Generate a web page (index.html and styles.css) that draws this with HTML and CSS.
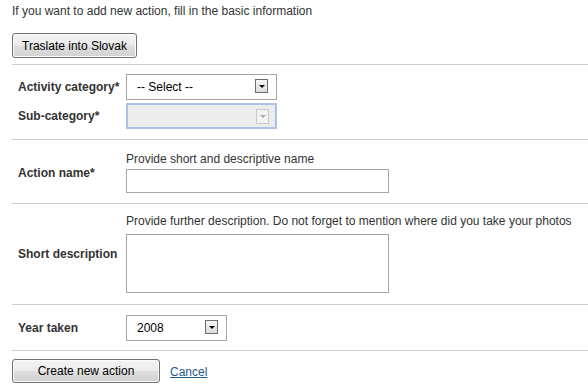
FILE: index.html
```html
<!DOCTYPE html>
<html lang="en">
<head>
    <meta charset="UTF-8">
    <meta name="viewport" content="width=device-width, initial-scale=1.0">
    <title>New action</title>
    <link rel="stylesheet" href="styles.css">
</head>
<body>
    <div id="new-action">
        <p class="intro">If you want to add new action, fill in the basic information</p>

        <div class="top-bar">
            <button class="btn btn-translate">Traslate into Slovak</button>
        </div>

        <div class="section section-category">
            <div class="row">
                <label class="label">Activity category*</label>
                <div class="select select-wide">
                    <select>
                        <option>-- Select --</option>
                    </select>
                    <span class="arrow"></span>
                </div>
            </div>
            <div class="row">
                <label class="label">Sub-category*</label>
                <div class="select select-wide disabled">
                    <select disabled>
                        <option></option>
                    </select>
                    <span class="arrow"></span>
                </div>
            </div>
        </div>

        <div class="section section-name">
            <div class="row">
                <label class="label">Action name*</label>
                <div class="field">
                    <div class="hint">Provide short and descriptive name</div>
                    <input type="text" class="text-input">
                </div>
            </div>
        </div>

        <div class="section section-desc">
            <div class="row">
                <label class="label">Short description</label>
                <div class="field">
                    <div class="hint hint-desc">Provide further description. Do not forget to mention where did you take your photos</div>
                    <textarea class="text-area"></textarea>
                </div>
            </div>
        </div>

        <div class="section section-year">
            <div class="row">
                <label class="label">Year taken</label>
                <div class="select select-year">
                    <select>
                        <option>2008</option>
                    </select>
                    <span class="arrow"></span>
                </div>
            </div>
        </div>

        <div class="section actions">
            <button class="btn btn-create">Create new action</button>
            <a href="#" class="cancel">Cancel</a>
        </div>
    </div>
</body>
</html>
```

FILE: styles.css
```css
body {
    margin: 0;
    padding: 0;
    background: #fff;
    color: #333;
    font-family: "Liberation Sans", Arial, sans-serif;
    font-size: 12px;
}

#new-action {
    padding-left: 12px;
}

.intro {
    margin: 0;
    padding-top: 4px;
    line-height: 14px;
}

.top-bar {
    padding: 15px 0 6px 0;
    height: 25px;
}

.btn {
    font-family: "Liberation Sans", Arial, sans-serif;
    font-size: 12px;
    color: #000;
    border: 1px solid #707070;
    border-radius: 3px;
    background: linear-gradient(to bottom, #f4f4f4 0%, #ececec 48%, #dedede 52%, #d2d2d2 100%);
    box-shadow: inset 0 0 0 1px #fcfcfc;
    padding: 0;
    margin: 0;
    cursor: pointer;
}

.btn-translate {
    width: 125px;
    height: 25px;
}

.btn-create {
    width: 148px;
    height: 24px;
}

.section {
    border-top: 1px solid #cdcdcd;
}

.row {
    display: flex;
    align-items: center;
}

.label {
    width: 108px;
    padding-left: 6px;
    font-weight: bold;
    color: #333;
    line-height: 14px;
}

.section-category {
    padding: 9px 0 10px 0;
}

.section-category .row + .row {
    margin-top: 3px;
}

.section-name {
    padding: 12px 0 10px 0;
}

.section-desc {
    padding: 10px 0 11px 0;
}

.section-year {
    padding: 10px 0 9px 0;
}

.actions {
    padding-top: 8px;
    display: flex;
    align-items: flex-start;
    gap: 10px;
    height: 33px;
}

.actions .cancel {
    margin-top: 6px;
}

.field {
    display: flex;
    flex-direction: column;
}

.hint {
    line-height: 14px;
    margin-bottom: 3px;
}

.hint-desc {
    margin-bottom: 6px;
}

.text-input {
    width: 263px;
    height: 24px;
    box-sizing: border-box;
    border: 1px solid #a5a5a5;
    margin: 0;
    padding: 2px 4px;
}

.text-area {
    width: 263px;
    height: 59px;
    box-sizing: border-box;
    border: 1px solid #a5a5a5;
    margin: 0;
    padding: 2px 4px;
    resize: none;
}

/* custom looking dropdowns */
.select {
    position: relative;
    height: 26px;
    box-sizing: border-box;
}

.select-wide {
    width: 151px;
}

.select-year {
    width: 101px;
}

.select select {
    appearance: none;
    -webkit-appearance: none;
    width: 100%;
    height: 100%;
    box-sizing: border-box;
    border: 1px solid #a5a5a5;
    background: #fff;
    padding: 0 0 0 10px;
    margin: 0;
    font-family: "Liberation Sans", Arial, sans-serif;
    font-size: 12px;
    color: #000;
    outline: none;
    opacity: 1;
}

.select .arrow {
    position: absolute;
    right: 9px;
    top: 5px;
    width: 13px;
    height: 14px;
    box-sizing: border-box;
    border: 1px solid #6d6d6d;
    background: linear-gradient(to bottom, #f6f6f6, #dcdcdc);
    pointer-events: none;
}

.select .arrow::after {
    content: "";
    position: absolute;
    left: 3px;
    top: 5px;
    border-left: 3px solid transparent;
    border-right: 3px solid transparent;
    border-top: 3px solid #000;
}

.select.disabled select {
    border: 2px solid #a9c4e6;
    background: #ececec;
    opacity: 1;
}

.select.disabled .arrow {
    top: 6px;
    right: 8px;
    border-color: #c9c9c9;
    background: #f3f3f3;
    height: 15px;
}

.select.disabled .arrow::after {
    border-top-color: #a8a8a8;
}

.cancel {
    color: #1d5b8f;
    text-decoration: underline;
    font-size: 12px;
}
```
